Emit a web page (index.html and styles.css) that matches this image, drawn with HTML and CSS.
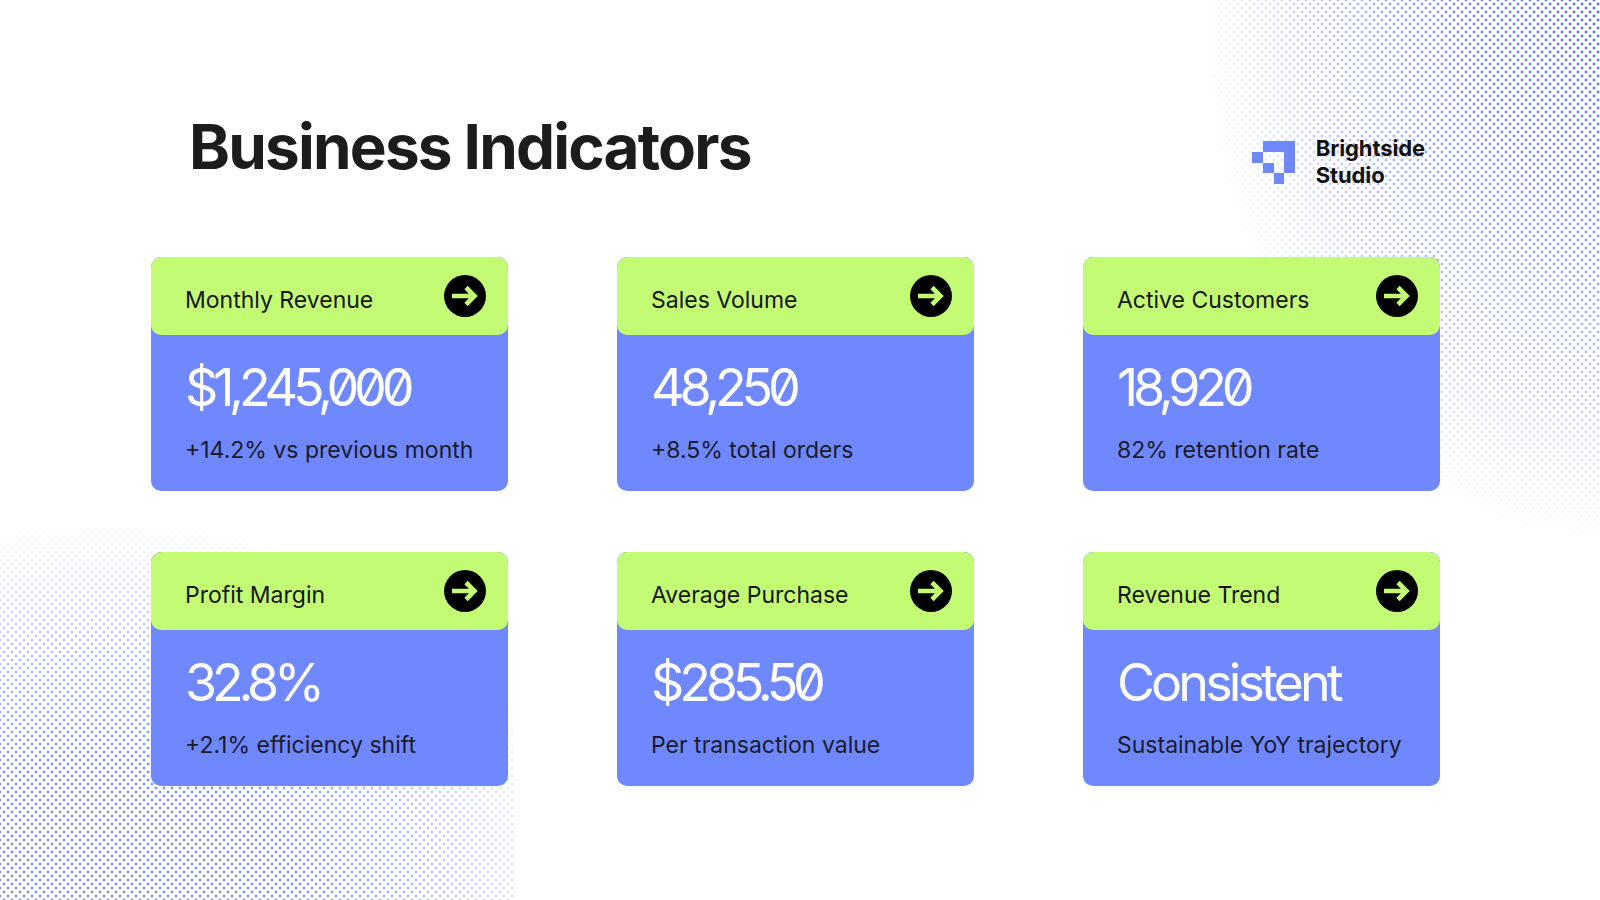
FILE: index.html
```html
<!DOCTYPE html>
<html lang="en">
<head>
<meta charset="utf-8">
<title>Business Indicators</title>
<link rel="stylesheet" href="styles.css">
</head>
<body>
<div class="page">
  <div class="dots dots-tr"></div>
  <div class="dots dots-bl"></div>
  <header class="top">
    <h1 class="title">Business Indicators</h1>
    <div class="brand">
      <svg class="brand-icon" viewBox="0 0 4 4" width="43" height="43" aria-hidden="true">
        <rect x="1" y="0" width="3" height="1"/>
        <rect x="3" y="0" width="1" height="3"/>
        <rect x="0" y="1" width="1" height="1"/>
        <rect x="1" y="2" width="1" height="1"/>
        <rect x="2" y="3" width="1" height="1"/>
      </svg>
      <div class="brand-name">Brightside<br>Studio</div>
    </div>
  </header>

  <main class="grid">
    <section class="card">
      <div class="card-head">
        <span class="label">Monthly Revenue</span>
        <svg class="arrow" viewBox="0 0 42 42" width="42" height="42" aria-hidden="true"><circle cx="21" cy="21" r="21"/><path d="M8 21H30M22 12.5L30.5 21L22 29.5"/></svg>
      </div>
      <div class="card-body">
        <div class="value num">$1,245,000</div>
        <div class="sub">+14.2% vs previous month</div>
      </div>
    </section>
    <section class="card">
      <div class="card-head">
        <span class="label">Sales Volume</span>
        <svg class="arrow" viewBox="0 0 42 42" width="42" height="42" aria-hidden="true"><circle cx="21" cy="21" r="21"/><path d="M8 21H30M22 12.5L30.5 21L22 29.5"/></svg>
      </div>
      <div class="card-body">
        <div class="value num">48,250</div>
        <div class="sub">+8.5% total orders</div>
      </div>
    </section>
    <section class="card">
      <div class="card-head">
        <span class="label">Active Customers</span>
        <svg class="arrow" viewBox="0 0 42 42" width="42" height="42" aria-hidden="true"><circle cx="21" cy="21" r="21"/><path d="M8 21H30M22 12.5L30.5 21L22 29.5"/></svg>
      </div>
      <div class="card-body">
        <div class="value num">18,920</div>
        <div class="sub">82% retention rate</div>
      </div>
    </section>
    <section class="card">
      <div class="card-head">
        <span class="label">Profit Margin</span>
        <svg class="arrow" viewBox="0 0 42 42" width="42" height="42" aria-hidden="true"><circle cx="21" cy="21" r="21"/><path d="M8 21H30M22 12.5L30.5 21L22 29.5"/></svg>
      </div>
      <div class="card-body">
        <div class="value num">32.8%</div>
        <div class="sub">+2.1% efficiency shift</div>
      </div>
    </section>
    <section class="card">
      <div class="card-head">
        <span class="label">Average Purchase</span>
        <svg class="arrow" viewBox="0 0 42 42" width="42" height="42" aria-hidden="true"><circle cx="21" cy="21" r="21"/><path d="M8 21H30M22 12.5L30.5 21L22 29.5"/></svg>
      </div>
      <div class="card-body">
        <div class="value num">$285.50</div>
        <div class="sub">Per transaction value</div>
      </div>
    </section>
    <section class="card">
      <div class="card-head">
        <span class="label">Revenue Trend</span>
        <svg class="arrow" viewBox="0 0 42 42" width="42" height="42" aria-hidden="true"><circle cx="21" cy="21" r="21"/><path d="M8 21H30M22 12.5L30.5 21L22 29.5"/></svg>
      </div>
      <div class="card-body">
        <div class="value">Consistent</div>
        <div class="sub">Sustainable YoY trajectory</div>
      </div>
    </section>
  </main>
</div>
</body>
</html>
```

FILE: styles.css
```css
* { box-sizing: border-box; }

html, body {
  margin: 0;
  padding: 0;
  background: #ffffff;
}

body {
  font-family: Inter, "Noto Sans", "Liberation Sans", sans-serif;
  color: #1a1a1a;
}

.page {
  position: relative;
  width: 1600px;
  height: 900px;
  overflow: hidden;
  background: #ffffff;
  padding-top: 116px;
}

/* halftone decoration */
.dots {
  position: absolute;
  z-index: 0;
  pointer-events: none;
  background-image:
    radial-gradient(circle, #6176e6 1.25px, transparent 1.75px),
    radial-gradient(circle, #6176e6 1.25px, transparent 1.75px);
  background-size: 8px 8px;
  background-position: 0 0, 4px 4px;
}

.dots-tr {
  top: 0;
  right: 0;
  width: 390px;
  height: 540px;
  -webkit-mask-image: radial-gradient(ellipse 400px 540px at 100% 0%, #000 0%, rgba(0,0,0,0.8) 35%, rgba(0,0,0,0.4) 70%, transparent 100%);
  mask-image: radial-gradient(ellipse 400px 540px at 100% 0%, #000 0%, rgba(0,0,0,0.8) 35%, rgba(0,0,0,0.4) 70%, transparent 100%);
}

.dots-bl {
  left: 0;
  bottom: 0;
  width: 515px;
  height: 380px;
  -webkit-mask-image: radial-gradient(ellipse 470px 380px at 22% 100%, rgba(0,0,0,0.8) 0%, rgba(0,0,0,0.75) 40%, rgba(0,0,0,0.35) 75%, transparent 100%);
  mask-image: radial-gradient(ellipse 470px 380px at 22% 100%, rgba(0,0,0,0.8) 0%, rgba(0,0,0,0.75) 40%, rgba(0,0,0,0.35) 75%, transparent 100%);
}

.top,
.grid {
  position: relative;
  z-index: 1;
}

.top {
  display: flex;
  justify-content: space-between;
  align-items: flex-start;
  padding: 0 175px 0 189px;
}

.title {
  margin: 0;
  font-family: Inter, "Noto Sans", sans-serif;
  font-weight: 700;
  font-size: 62px;
  line-height: 62px;
  letter-spacing: -0.029em;
  color: #1c1c1c;
}

.brand {
  display: flex;
  align-items: center;
  gap: 21px;
  margin-top: 19px;
}

.brand-icon {
  display: block;
  fill: #6f88fd;
  shape-rendering: crispEdges;
}

.brand-name {
  font-weight: 700;
  font-size: 22px;
  line-height: 27px;
  letter-spacing: -0.005em;
  color: #111111;
}

.grid {
  display: grid;
  grid-template-columns: repeat(3, 357px);
  grid-auto-rows: 234px;
  column-gap: 109px;
  row-gap: 61px;
  margin: 68px 0 0 151px;
}

.card {
  display: flex;
  flex-direction: column;
  background: #6f88fd;
  border-radius: 10px;
  overflow: hidden;
}

.card-head {
  display: flex;
  align-items: center;
  justify-content: space-between;
  height: 78px;
  flex: none;
  padding: 0 22px 0 34px;
  background: #c4fb74;
  border-radius: 10px;
}

.label {
  padding-top: 7px;
  font-size: 23px;
  font-weight: 400;
  letter-spacing: 0;
  color: #151515;
}

.arrow {
  display: block;
  flex: none;
}

.arrow circle {
  fill: #000000;
}

.arrow path {
  fill: none;
  stroke: #c4fb74;
  stroke-width: 4.6;
  stroke-linecap: butt;
  stroke-linejoin: miter;
}

.card-body {
  padding: 27px 34px 0;
}

.value {
  font-size: 52px;
  line-height: 52px;
  font-weight: 400;
  letter-spacing: -0.075em;
  font-feature-settings: "zero" 1;
  color: #ffffff;
  white-space: nowrap;
}

.value.num {
  letter-spacing: -0.1em;
}

.sub {
  margin-top: 21.6px;
  font-size: 23px;
  line-height: 28px;
  font-weight: 400;
  letter-spacing: 0;
  color: #1b1b2b;
  white-space: nowrap;
}
```
